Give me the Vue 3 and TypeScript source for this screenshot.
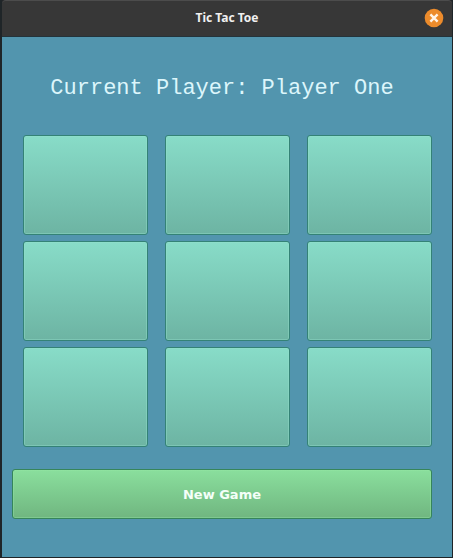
<script setup lang="ts">
import { computed, ref } from 'vue'

type Mark = '' | 'X' | 'O'

const board = ref<Mark[]>(Array(9).fill(''))
const turn = ref<'X' | 'O'>('X')
const player = computed(() => (turn.value === 'X' ? 'Player One' : 'Player Two'))

function play(index: number): void {
  if (board.value[index]) return
  board.value[index] = turn.value
  turn.value = turn.value === 'X' ? 'O' : 'X'
}

function newGame(): void {
  board.value = Array(9).fill('')
  turn.value = 'X'
}
</script>

<template>
  <div class="window">
    <header class="titlebar">
      <h1 class="title">Tic Tac Toe</h1>
      <button class="close" type="button" aria-label="Close">
        <svg viewBox="0 0 20 20" width="20" height="20" aria-hidden="true">
          <circle cx="10" cy="10" r="9.3" fill="#ec8b2b" />
          <path d="M6.4 6.4 L13.6 13.6 M13.6 6.4 L6.4 13.6" stroke="#fff4e8" stroke-width="2.4" fill="none" />
        </svg>
      </button>
    </header>
    <main class="content">
      <p class="status">Current Player: {{ player }}</p>
      <div class="board">
        <button
          v-for="(mark, i) in board"
          :key="i"
          class="cell"
          type="button"
          :aria-label="`Square ${i + 1} ${mark}`"
          @click="play(i)"
        >{{ mark }}</button>
      </div>
      <button class="new-game" type="button" @click="newGame">New Game</button>
    </main>
  </div>
</template>

<style>
body {
  margin: 0;
  background: #242628;
}
</style>

<style scoped>
.window {
  box-sizing: border-box;
  min-height: 100vh;
  display: flex;
  flex-direction: column;
  border: 1px solid #1f2528;
  border-width: 0 1px 1px 2px;
  background: #242628;
}

.titlebar {
  box-sizing: border-box;
  height: 37px;
  display: grid;
  grid-template-columns: 1fr auto 1fr;
  align-items: center;
  padding: 0 8px 2px;
  background: #373737;
  border-top: 1px solid #4c4c4c;
  border-bottom: 1px solid #24333a;
  border-radius: 4px 4px 0 0;
}

.title {
  grid-column: 2;
  margin: 0;
  font: bold 12px/18px "Noto Sans", sans-serif;
  color: #f0f0f0;
}

.close {
  justify-self: end;
  display: flex;
  padding: 0;
  border: 0;
  background: none;
}

.content {
  flex: 1;
  padding: 37px 20px 38px 10px;
  background: #5295ae;
}

.status {
  margin: 0;
  font: 22px/30px "Liberation Mono", monospace;
  color: #dcf6fb;
  text-align: center;
  white-space: nowrap;
}

.board {
  display: grid;
  grid-template-columns: repeat(3, 1fr);
  grid-auto-rows: 100px;
  gap: 6px 17px;
  margin: 31px 0 22px 11px;
}

.cell,
.new-game {
  box-sizing: border-box;
  padding: 0;
  border-radius: 3px;
  color: #f4fff8;
  font-family: "DejaVu Sans", sans-serif;
  font-weight: bold;
}

.cell {
  border: 1px solid #348276;
  background: linear-gradient(#88dcc8, #6db4a3);
  box-shadow: inset 0 0 0 1px rgba(150, 225, 205, 0.4);
  font-size: 40px;
}

.new-game {
  display: block;
  width: 100%;
  height: 50px;
  border: 1px solid #36855a;
  background: linear-gradient(#8adf9d, #70b680);
  box-shadow: inset 0 0 0 1px rgba(150, 230, 165, 0.4);
  font-size: 13px;
}
</style>
